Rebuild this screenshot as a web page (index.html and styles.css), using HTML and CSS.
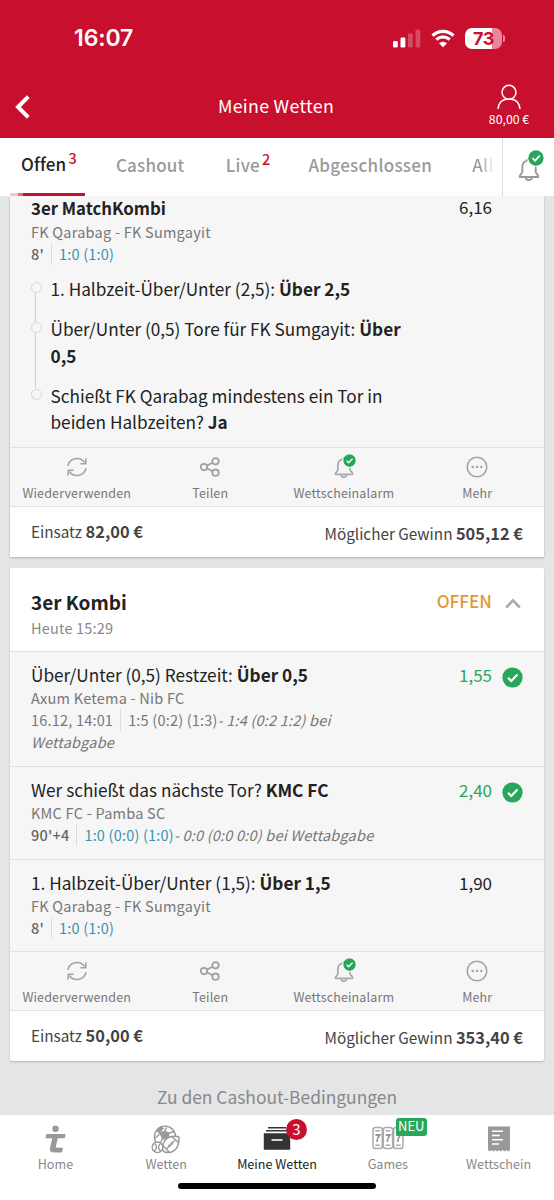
FILE: index.html
```html
<!DOCTYPE html>
<html lang="de">
<head>
<meta charset="utf-8">
<title>Meine Wetten</title>
<link rel="stylesheet" href="styles.css">
</head>
<body>
<svg class="defs" width="0" height="0">
  <symbol id="check" viewBox="0 0 22 22"><circle cx="11" cy="11" r="10.6" fill="#27a75a"/><path d="M6.2 11.3l3.5 3.4 6.5-6.9" fill="none" stroke="#fff" stroke-width="2.3"/></symbol>
  <symbol id="bell" viewBox="0 0 22 24"><path d="M9 3.6a2 2 0 0 1 4 0c3.400.9 4.700 3.500 4.700 6.500v5.100l2.500 3.500v1.300H1.800v-1.300l2.500-3.500v-5.100c0-3 1.300-5.600 4.700-6.500z" fill="none" stroke="currentColor" stroke-width="1.9" stroke-linejoin="round"/><path d="M8 20.500a3 2.600 0 0 0 6 0" fill="none" stroke="currentColor" stroke-width="1.9"/></symbol>
  <symbol id="reload" viewBox="0 0 22 22"><path d="M2 9.800A9 8.600 0 0 1 18.500 6.500M20 12.200A9 8.600 0 0 1 3.500 15.500M19.800 2.200v5.500h-5.500M2.200 19.800v-5.500h5.500" fill="none" stroke="currentColor" stroke-width="1.5"/></symbol>
  <symbol id="share" viewBox="0 0 22 22"><g fill="none" stroke="currentColor" stroke-width="1.800"><circle cx="5" cy="11" r="3.200"/><circle cx="16.500" cy="5.300" r="3.200"/><circle cx="16.500" cy="16.700" r="3.200"/><path d="M7.900 9.600l5.700-2.900M7.900 12.400l5.700 2.900"/></g></symbol>
  <symbol id="more" viewBox="0 0 22 22"><circle cx="11" cy="11" r="9.800" fill="none" stroke="currentColor" stroke-width="1.500"/><g fill="currentColor"><circle cx="6.700" cy="11" r="1.200"/><circle cx="11" cy="11" r="1.200"/><circle cx="15.300" cy="11" r="1.200"/></g></symbol>
</svg>
<div class="app">
  <header class="top">
    <div class="status">
      <span class="time">16:07</span>
      <div class="indicators">
        <svg class="signal" width="28" height="19" viewBox="0 0 28 19" fill="#fff"><rect x="0" y="12" width="4.800" height="6.500" rx="1.300"/><rect x="7.500" y="8.500" width="4.800" height="10" rx="1.300"/><rect x="15" y="4.500" width="4.800" height="14" rx="1.300" opacity=".25"/><rect x="22.500" y=".5" width="4.800" height="18" rx="1.300" opacity=".25"/></svg>
        <svg class="wifi" width="24" height="19" viewBox="0 0 24 19"><path d="M1.500 6.700a15 15 0 0 1 21 0M5.300 10.700a9.600 9.600 0 0 1 13.400 0" fill="none" stroke="#fff" stroke-width="3.200"/><path d="M12 18.300L8 14.300a5.700 5.700 0 0 1 8 0z" fill="#fff"/></svg>
        <div class="battery"><span class="level">73</span><i class="cap"></i></div>
      </div>
    </div>
    <div class="titlebar">
      <svg class="back" width="16" height="24" viewBox="0 0 16 24"><path d="M13.300 1.700L3 12l10.300 10.300" fill="none" stroke="#fff" stroke-width="4"/></svg>
      <h1>Meine Wetten</h1>
      <div class="account">
        <svg width="26" height="26" viewBox="0 0 26 26" fill="none" stroke="#fff" stroke-width="1.500"><circle cx="13" cy="8.300" r="7"/><path d="M2 25c.3-5.500 4-9.700 8.500-9.700h5c4.500 0 8.200 4.200 8.500 9.700"/></svg>
        <span>80,00 €</span>
      </div>
    </div>
  </header>
  <nav class="tabs">
    <div class="tab active">Offen<sup>3</sup></div>
    <div class="tab cashout">Cashout</div>
    <div class="tab live">Live<sup>2</sup></div>
    <div class="tab closed">Abgeschlossen</div>
    <div class="tab all">All</div>
    <div class="alarm"><span class="bell-icon large"><svg class="bell"><use href="#bell"/></svg><svg class="tick"><use href="#check"/></svg></span></div>
  </nav>
  <main class="content">
    <section class="card">
      <div class="match">
        <div class="row"><b class="match-title">3er MatchKombi</b><span class="odds">6,16</span></div>
        <div class="teams">FK Qarabag - FK Sumgayit</div>
        <div class="score"><span class="minute">8'</span><span class="live-score">1:0 (1:0)</span></div>
        <ul class="legs">
          <li>1. Halbzeit-Über/Unter (2,5): <b>Über 2,5</b></li>
          <li>Über/Unter (0,5) Tore für FK Sumgayit: <b>Über<br>0,5</b></li>
          <li>Schießt FK Qarabag mindestens ein Tor in<br>beiden Halbzeiten? <b>Ja</b></li>
        </ul>
      </div>
      <div class="actions">
        <div class="action"><svg class="icon"><use href="#reload"/></svg>Wiederverwenden</div>
        <div class="action"><svg class="icon"><use href="#share"/></svg>Teilen</div>
        <div class="action"><span class="bell-icon"><svg class="bell"><use href="#bell"/></svg><svg class="tick"><use href="#check"/></svg></span>Wettscheinalarm</div>
        <div class="action"><svg class="icon"><use href="#more"/></svg>Mehr</div>
      </div>
      <div class="summary"><span>Einsatz <b>82,00 €</b></span><span class="win">Möglicher Gewinn <b>505,12 €</b></span></div>
    </section>
    <section class="card second">
      <div class="card-head">
        <div class="row"><b class="card-title">3er Kombi</b><span class="state">OFFEN</span><svg class="chevron" width="16" height="11" viewBox="0 0 16 11"><path d="M1.200 9.500L8 2.400l6.800 7.100" fill="none" stroke="#aaa" stroke-width="2.600"/></svg></div>
        <div class="date">Heute 15:29</div>
      </div>
      <div class="tip">
        <div class="row"><span>Über/Unter (0,5) Restzeit: <b>Über 0,5</b></span><span class="odds won">1,55</span><svg class="result"><use href="#check"/></svg></div>
        <div class="teams">Axum Ketema - Nib FC</div>
        <div class="score"><span class="when">16.12, 14:01</span><span>1:5 (0:2) (1:3)</span><em>- 1:4 (0:2 1:2) bei</em></div>
        <div class="score"><em>Wettabgabe</em></div>
      </div>
      <div class="tip">
        <div class="row"><span>Wer schießt das nächste Tor? <b>KMC FC</b></span><span class="odds won">2,40</span><svg class="result"><use href="#check"/></svg></div>
        <div class="teams">KMC FC - Pamba SC</div>
        <div class="score"><span class="minute">90'+4</span><span class="live-score">1:0 (0:0) (1:0)</span><em>- 0:0 (0:0 0:0) bei Wettabgabe</em></div>
      </div>
      <div class="tip">
        <div class="row"><span>1. Halbzeit-Über/Unter (1,5): <b>Über 1,5</b></span><span class="odds">1,90</span></div>
        <div class="teams">FK Qarabag - FK Sumgayit</div>
        <div class="score"><span class="minute">8'</span><span class="live-score">1:0 (1:0)</span></div>
      </div>
      <div class="actions">
        <div class="action"><svg class="icon"><use href="#reload"/></svg>Wiederverwenden</div>
        <div class="action"><svg class="icon"><use href="#share"/></svg>Teilen</div>
        <div class="action"><span class="bell-icon"><svg class="bell"><use href="#bell"/></svg><svg class="tick"><use href="#check"/></svg></span>Wettscheinalarm</div>
        <div class="action"><svg class="icon"><use href="#more"/></svg>Mehr</div>
      </div>
      <div class="summary"><span>Einsatz <b>50,00 €</b></span><span class="win">Möglicher Gewinn <b>353,40 €</b></span></div>
    </section>
    <div class="terms">Zu den Cashout-Bedingungen</div>
  </main>
  <footer class="bottom">
    <div class="menu">
      <div class="entry"><svg width="28" height="30" viewBox="0 0 28 30" fill="#999"><circle cx="14.500" cy="4.800" r="3.200"/><path d="M5.400 10h19.200l-.9 4.300h-6.900l-1.800 7.500c-.3 1.300.2 2 1.500 2h5.500l-1.100 4.600h-8.300c-3 0-4.300-1.700-3.600-4.600l2.300-9.500H4.400z"/></svg>Home</div>
      <div class="entry"><svg width="30" height="30" viewBox="0 0 30 30" fill="none" stroke="#999" stroke-width="1.400"><circle cx="14" cy="12.700" r="10.600"/><path d="M13.500 7.500l2-4M18.500 9l5-1.500M17.500 14l4 2M11.500 14.500l-2 4M8.500 10L4.500 14"/><path d="M9 9l4.500-1.500L18 9l-.7 4.700-5.600 1.300zM6 6.500L10 3l2 1.500-4 4z" fill="#999"/><circle cx="6.500" cy="23.300" r="5.300" fill="#fff"/><path d="M3.500 19.500q4 3.500 0 7.500M9.500 19.500q-4 3.500 0 7.500"/><path d="M27.700 12.700c1 6-1 15.800-11 15.800-4 0-5.500-1.500-5-6 .8-7.200 6.500-11.800 16-9.800z" fill="#fff"/><path d="M16 24.500l7.500-8M12 21.500l6 6.500M21 12.700l6.700 6M17.500 20.700l2 2M19.700 18.500l2 2"/></svg>Wetten</div>
      <div class="entry current"><span class="slip"><svg width="28" height="30" viewBox="0 0 28 30" fill="#333"><path d="M5 3h18v1.500H5zM3 6h22v1.500H3zM.8 9.200h26.400v16.500H.8z"/><path d="M8.500 16h11" stroke="#fff" stroke-width="1.600"/></svg><span class="count">3</span></span>Meine Wetten</div>
      <div class="entry"><span class="slip"><svg width="32" height="30" viewBox="0 0 32 30" fill="none" stroke="#aaa" stroke-width="1.500"><rect x="1" y="3.500" width="9.300" height="21" rx="2.500"/><rect x="11.300" y="3.500" width="9.300" height="21" rx="2.500"/><rect x="21.600" y="3.500" width="9.300" height="21" rx="2.500"/><path d="M3.300 6.800h4.700M13.600 6.800h4.700M24 6.800h4.700M3.300 21.300h4.700M13.600 21.300h4.700M24 21.300h4.700" stroke-width="1.600"/><path d="M3.500 11h4.200q-2.500 3-2.700 7M13.800 11h4.200q-2.500 3-2.700 7M24.100 11h4.200q-2.500 3-2.700 7" stroke="#999" stroke-width="1.800"/></svg><span class="new">NEU</span></span>Games</div>
      <div class="entry"><svg width="24" height="30" viewBox="0 0 24 30"><path d="M1 2.500h22v23.500l-1.800 1.500-1.900-1.500-1.800 1.500-1.800-1.500-1.900 1.500-1.800-1.500-1.800 1.500-1.900-1.500-1.800 1.500-1.800-1.500-1.900 1.500L1 26z" fill="#999"/><path d="M5 7.300h11M5 11.500h8M5 15.700h11M5 19.900h7" stroke="#fff" stroke-width="1.500"/></svg>Wettschein</div>
    </div>
    <div class="homebar"></div>
  </footer>
</div>
</body>
</html>
```
FILE: styles.css
```css
* { box-sizing: border-box; }
body {
  margin: 0;
  font-family: "Noto Sans CJK SC", "Noto Sans", sans-serif;
  color: #222;
}
.defs { position: absolute; }
svg { display: block; flex: none; }
.app {
  width: 554px;
  height: 1200px;
  display: flex;
  flex-direction: column;
  overflow: hidden;
  background: #e4e5e7;
}
.top { flex: none; height: 138px; background: #c80f2d; color: #fff; }
.status {
  height: 76px;
  padding: 0 49px 0 74px;
  display: flex;
  align-items: center;
  justify-content: space-between;
}
.time { font: 600 23px/26px Inter, sans-serif; letter-spacing: -0.1px; }
.indicators { display: flex; align-items: center; }
.wifi { margin: 0 10px 0 10px; }
.battery { display: flex; align-items: center; }
.level {
  width: 37px;
  height: 21px;
  border-radius: 7px;
  background: linear-gradient(90deg, #fff 27px, #e9879a 27px);
  color: #c80f2d;
  font: 700 18px/21px Inter, sans-serif;
  text-align: center;
  letter-spacing: -0.5px;
}
.cap { width: 2px; height: 7px; margin-left: 1px; border-radius: 0 2px 2px 0; background: #e9879a; }
.titlebar { height: 62px; display: grid; grid-template-columns: 76px 1fr 80px; padding: 0 5px 0 15px; }
.back { margin-top: 19px; }
.titlebar h1 { margin: 16px 0 0; padding-right: 8px; text-align: center; font-size: 17.800px; line-height: 26px; font-weight: 400; letter-spacing: 0.3px; }
.account { display: flex; flex-direction: column; align-items: center; padding-top: 8px; font-size: 12.300px; line-height: 18px; }
.account span { white-space: nowrap; }
.tabs {
  flex: none;
  height: 58px;
  display: flex;
  background: #fff;
  color: #999;
  font-size: 17px;
  font-weight: 500;
  line-height: 54px;
  letter-spacing: 0.3px;
  white-space: nowrap;
}
.tab sup { font-size: 14.500px; line-height: 1; color: #c80f2d; vertical-align: 7px; margin-left: 2px; }
.active { margin-left: 10px; width: 75px; padding-left: 11px; color: #222; background: linear-gradient(90deg, #f4c6cf 8px, #dc6f81 8px 13px, #c80f2d 13px) bottom / 100% 3px no-repeat; line-height: 51px; letter-spacing: 0.150px; }
.cashout { margin-left: 31px; width: 110px; letter-spacing: 0.200px; }
.live { width: 83px; }
.closed { width: 164px; letter-spacing: 0.280px; }
.all { width: 30px; background: linear-gradient(90deg, #999 8px, #eee 20px); -webkit-background-clip: text; background-clip: text; color: transparent; }
.alarm { margin-left: auto; width: 52px; border-left: 1px solid #ddd; display: flex; padding: 12px 0 0 15px; }
.content { flex: 1; padding: 0 10px; min-height: 0; }
.card { background: #fff; box-shadow: 0 1px 2px rgba(0, 0, 0, .22); font-size: 17.200px; }
.second { margin-top: 11px; border-radius: 2px; }
.row { display: flex; line-height: 25px; white-space: nowrap; }
.match { height: 251px; padding: 1px 52px 0 21px; background: #f6f6f6; }
.match .row { line-height: 22px; margin-bottom: 2px; }
.match-title { font-size: 16.800px; }
.match .odds { margin-top: -1px; }
.odds { margin-left: auto; font-size: 17px; }
.teams, .score { font-size: 14.500px; line-height: 22px; color: #777; white-space: nowrap; letter-spacing: 0.2px; }
.teams { letter-spacing: 0.240px; }
.score { display: flex; }
.minute, .when { padding-right: 7px; margin-right: 7px; border-right: 1px solid #ddd; }
.minute { font-weight: 500; color: #666; }
.live-score { color: #3a93ae; }
.legs { list-style: none; margin: 11px 0 0; padding: 0; line-height: 26.500px; }
.legs li { position: relative; padding-left: 19.500px; margin-bottom: 13.500px; white-space: nowrap; }
.legs li::before { content: ""; position: absolute; left: 0; top: 6px; width: 9px; height: 9px; border: 1.500px solid #d6d6d6; border-radius: 50%; }
.legs li:not(:last-child)::after { content: ""; position: absolute; left: 4px; top: 16px; bottom: -19px; width: 1px; background: #d0d0d0; }
.actions { height: 60px; display: grid; grid-template-columns: repeat(4, 133.500px); background: #f6f6f6; border-top: 1px solid #e3e3e3; border-bottom: 1px solid #e3e3e3; }
.action { display: flex; flex-direction: column; align-items: center; color: #777; font-size: 12.500px; line-height: 18px; padding-top: 8px; letter-spacing: 0.140px; }
.icon { width: 22px; height: 22px; margin-bottom: 6px; color: #a2a2a2; }
.bell-icon { position: relative; display: block; width: 20px; height: 22px; margin-bottom: 6px; color: #aaa; }
.bell { width: 20px; height: 22px; }
.tick { position: absolute; left: 9px; top: -2px; width: 13px; height: 13px; border-radius: 50%; box-shadow: 0 0 0 1px #f6f6f6; }
.large .bell { width: 22px; height: 24px; color: #999; margin-top: 7px; }
.large .tick { left: 10px; top: 0; width: 16px; height: 16px; box-shadow: 0 0 0 1px #fff; }
.summary { height: 50px; padding: 12px 21px 0; display: flex; justify-content: space-between; color: #444; font-size: 15.300px; line-height: 24px; }
.summary b { font-size: 16.400px; }
.win { margin-top: 2px; }
.card-head { height: 83px; padding: 21px 21px 0; }
.card-title { font-size: 19px; }
.state { margin-left: auto; color: #e09a35; font-size: 17.200px; font-weight: 500; line-height: 23px; }
.chevron { margin: 9px 2px 0 13px; }
.date { font-size: 14.500px; line-height: 22px; margin-top: 3px; color: #888; letter-spacing: 0.2px; }
.tip { padding: 10px 21px 12.800px; border-top: 1px solid #e0e0e0; background: #f6f6f6; }
.tip .odds { margin-right: 31px; }
.tip .won { color: #27a75a; margin-right: 10px; }
.result { width: 21px; height: 21px; margin: 5px 0 -2px; }
.terms { text-align: center; color: #888; font-size: 17.400px; line-height: 26px; margin-top: 23px; }
.bottom { flex: none; height: 85px; background: #fff; }
.menu { height: 68px; display: grid; grid-template-columns: repeat(5, 1fr); padding-top: 9px; }
.entry { display: flex; flex-direction: column; align-items: center; color: #888; font-size: 12.600px; line-height: 18px; white-space: nowrap; }
.entry > :first-child { margin-bottom: 1px; }
.current { color: #222; }
.slip { position: relative; }
.count { position: absolute; left: 23px; top: -5px; width: 21px; height: 21px; border-radius: 50%; background: #c80f2d; color: #fff; font-size: 15px; line-height: 19px; text-align: center; }
.new { position: absolute; left: 24px; top: -6px; width: 31px; height: 18px; border-radius: 3px; background: #27a75a; color: #fff; font-size: 13px; line-height: 16px; text-align: center; }
.homebar { width: 198px; height: 6px; border-radius: 3px; margin: 0 auto; background: #000; }
```
